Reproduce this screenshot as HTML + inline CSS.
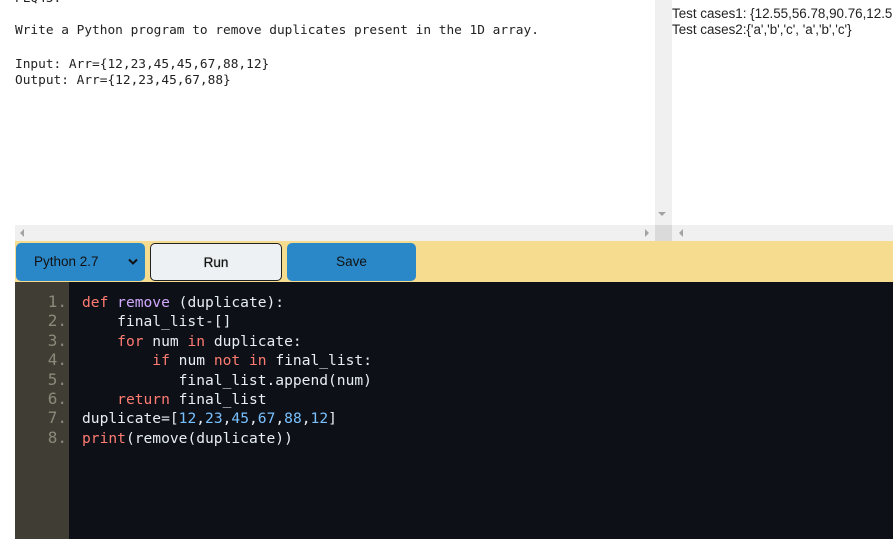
<!DOCTYPE html>
<html><head><meta charset="utf-8"><style>
body{margin:0;width:893px;height:539px;overflow:hidden;background:#fff;position:relative;font-family:"Liberation Sans",sans-serif}
.a{position:absolute}
.mono{font-family:"DejaVu Sans Mono","Liberation Mono",monospace}
.top{left:15px;font-size:12.8px;color:#222;white-space:pre}
.btn{position:absolute;top:243px;height:38px;border-radius:5px;font-size:13.5px;line-height:38px;text-align:center;box-sizing:border-box}
.code{left:82px;top:293px;font-size:14.6px;line-height:19.4px;color:#e6edf3;white-space:pre}
.gut{left:15px;top:292px;width:52px;text-align:right;font-size:16px;line-height:19.4px;color:#8b8a7a;white-space:pre}
.k{color:#ff7b72}.f{color:#d2a8ff}.n{color:#79c0ff}
</style></head><body>
<div class="a mono top" style="top:-9px;">PLQ45.</div>
<div class="a mono top" style="top:23px;">Write a Python program to remove duplicates present in the 1D array.</div>
<div class="a mono top" style="top:57px;line-height:16px">Input: Arr={12,23,45,45,67,88,12}
Output: Arr={12,23,45,67,88}</div>
<div class="a" style="left:655px;top:0;width:17px;height:225px;background:#f0f0f0"></div>
<div class="a" style="left:658px;top:212px;width:0;height:0;border-left:4px solid transparent;border-right:4px solid transparent;border-top:4px solid #a3a3a3"></div>
<div class="a" style="left:15px;top:225px;width:878px;height:17px;background:#f0f0f0"></div>
<div class="a" style="left:655px;top:225px;width:17px;height:17px;background:#dadada"></div>
<div class="a" style="left:20px;top:229px;width:0;height:0;border-top:4px solid transparent;border-bottom:4px solid transparent;border-right:4px solid #a3a3a3"></div>
<div class="a" style="left:645px;top:229px;width:0;height:0;border-top:4px solid transparent;border-bottom:4px solid transparent;border-left:4px solid #a3a3a3"></div>
<div class="a" style="left:679px;top:229px;width:0;height:0;border-top:4px solid transparent;border-bottom:4px solid transparent;border-right:4px solid #a3a3a3"></div>
<div class="a" style="left:672px;top:6px;font-size:13.4px;line-height:16px;color:#222;white-space:nowrap">Test cases1: {12.55,56.78,90.76,12.55}<br>Test cases2:{'a','b','c', 'a','b','c'}</div>
<div class="a" style="left:15px;top:241px;width:878px;height:41px;background:#f5dc8f"></div>
<div class="btn" style="left:16px;width:129px;background:#2b88c8;color:#111;text-align:left;padding-left:18px">Python 2.7<svg class="a" style="left:112px;top:15px" width="10" height="8" viewBox="0 0 10 8"><path d="M1 1.5L5 5.5L9 1.5" stroke="#111" stroke-width="2" fill="none"/></svg></div>
<div class="btn" style="left:150px;width:132px;background:#edf1f3;border:1px solid #222;color:#111;text-shadow:0 0 1px #555">Run</div>
<div class="btn" style="left:287px;width:129px;background:#2b88c8;color:#111">Save</div>
<div class="a" style="left:15px;top:282px;width:878px;height:257px;background:#0d1117"></div>
<div class="a" style="left:15px;top:282px;width:54px;height:257px;background:#3f3d34"></div>
<div class="a mono gut">1.
2.
3.
4.
5.
6.
7.
8.</div>
<div class="a mono code"><span class="k">def</span> <span class="f">remove</span> (duplicate):
    final_list-[]
    <span class="k">for</span> num <span class="k">in</span> duplicate:
        <span class="k">if</span> num <span class="k">not</span> <span class="k">in</span> final_list:
           final_list.append(num)
    <span class="k">return</span> final_list
duplicate=[<span class="n">12</span>,<span class="n">23</span>,<span class="n">45</span>,<span class="n">67</span>,<span class="n">88</span>,<span class="n">12</span>]
<span class="k">print</span>(remove(duplicate))</div>
</body></html>
